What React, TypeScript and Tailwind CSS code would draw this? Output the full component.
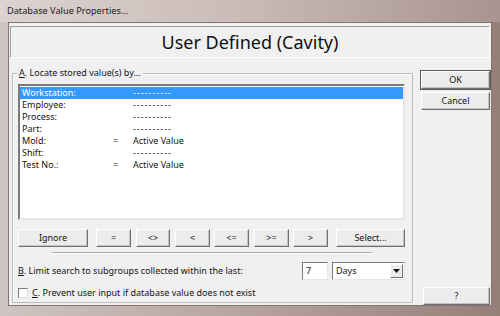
import React from "react";

const rows = [
  { name: "Workstation:", op: "", value: "----------" },
  { name: "Employee:", op: "", value: "----------" },
  { name: "Process:", op: "", value: "----------" },
  { name: "Part:", op: "", value: "----------" },
  { name: "Mold:", op: "=", value: "Active Value" },
  { name: "Shift:", op: "", value: "----------" },
  { name: "Test No.:", op: "=", value: "Active Value" },
];

const opButtons = [
  { label: "Ignore", w: "w-[70px]", ml: "ml-0" },
  { label: "=", w: "w-[35px]", ml: "ml-[8px]" },
  { label: "<>", w: "w-[34px]", ml: "ml-[5px]" },
  { label: "<", w: "w-[35px]", ml: "ml-[5px]" },
  { label: "<=", w: "w-[35px]", ml: "ml-[4px]" },
  { label: ">=", w: "w-[35px]", ml: "ml-[5px]" },
  { label: ">", w: "w-[35px]", ml: "ml-[4px]" },
  { label: "Select...", w: "w-[69px]", ml: "ml-[8px]" },
];

function Btn({ label, className = "" }: { label: string; className?: string }) {
  return (
    <div
      className={`flex items-center justify-center bg-[#ececec] border border-t-white border-l-white border-b-[#707070] border-r-[#707070] shadow-[inset_-1px_-1px_0_#c4c4c4] ${className}`}
    >
      {label}
    </div>
  );
}

export default function App() {
  return (
    <div className="w-[500px] h-[316px] overflow-hidden flex flex-col bg-gradient-to-r from-[#cfc4c1] via-[#b5a39e] to-[#958079] font-['Noto_Sans',sans-serif] text-[#141414]">
      {/* Title bar */}
      <div className="h-[22px] pl-[7px] flex items-center text-[9.2px] text-[#202020] bg-gradient-to-r from-[#dcd3d0] via-[#c9bab6] to-[#a8948f]">
        Database Value Properties...
      </div>

      {/* Client area */}
      <div className="mx-[8px] h-[284px] bg-[#f0f0f0] border border-[#85736f] flex flex-col">
        {/* Header */}
        <div className="mt-[3px] mx-[1px] h-[32px] border border-t-[#a0a0a0] border-l-[#a0a0a0] border-b-white border-r-white flex items-center justify-center text-[18px] text-[#111]">
          User Defined (Cavity)
        </div>

        <div className="flex mt-[13px]">
          {/* Group box */}
          <div className="relative ml-[3px] mt-[2px] w-[401px] h-[230px] border border-[#bdbdbd] shadow-[inset_1px_1px_0_#fff] text-[9px]">
            <div className="absolute -top-[7px] left-[4px] px-[2px] bg-[#f0f0f0] leading-[12px]">
              <span className="underline">A</span>. Locate stored value(s) by...
            </div>

            {/* List box */}
            <div className="ml-[5px] mt-[10px] w-[387px] h-[136px] bg-white border-2 border-t-[#7a7a7a] border-l-[#7a7a7a] border-b-[#e6e6e6] border-r-[#e6e6e6] pt-[1px]">
              {rows.map((r, i) => (
                <div
                  key={r.name}
                  className={`h-[12px] flex items-center leading-[12px] pl-[2px] ${i === 0 ? "bg-[#3399ff] text-white" : ""}`}
                >
                  <span className="w-[91px]">{r.name}</span>
                  <span className="w-[20px]">{r.op}</span>
                  <span className={r.op ? "" : "tracking-[1px]"}>{r.value}</span>
                </div>
              ))}
            </div>

            {/* Operator buttons */}
            <div className="flex ml-[5px] mt-[9px] h-[18px]">
              {opButtons.map((b) => (
                <Btn key={b.label} label={b.label} className={`${b.w} ${b.ml} h-[18px]`} />
              ))}
            </div>

            {/* Separator */}
            <div className="ml-[39px] mt-[5px] w-[320px] h-[2px] border-t border-t-[#a8a8a8] border-b border-b-white" />

            {/* B row */}
            <div className="flex items-center ml-[5px] mt-[8px] h-[18px]">
              <span className="w-[284px]">
                <span className="underline">B</span>. Limit search to subgroups collected within the last:
              </span>
              <div className="w-[26px] h-[18px] bg-white border border-t-[#7a7a7a] border-l-[#7a7a7a] border-b-[#e6e6e6] border-r-[#e6e6e6] pl-[3px] flex items-center">
                7
              </div>
              <div className="ml-[4px] w-[73px] h-[18px] bg-white border border-t-[#7a7a7a] border-l-[#7a7a7a] border-b-[#e6e6e6] border-r-[#e6e6e6] flex items-center justify-between pl-[3px] pr-[1px]">
                <span>Days</span>
                <div className="w-[13px] h-[14px] bg-[#ececec] border border-t-white border-l-white border-b-[#707070] border-r-[#707070] flex items-center justify-center">
                  <svg width="7" height="4" viewBox="0 0 7 4">
                    <path d="M0 0 H7 L3.5 4 Z" fill="#111" />
                  </svg>
                </div>
              </div>
            </div>

            {/* C row */}
            <div className="flex items-center ml-[5px] mt-[7px] h-[12px]">
              <div className="w-[10px] h-[10px] bg-white border border-t-[#7a7a7a] border-l-[#7a7a7a] border-b-[#dcdcdc] border-r-[#dcdcdc]" />
              <span className="ml-[4px]">
                <span className="underline">C</span>. Prevent user input if database value does not exist
              </span>
            </div>
          </div>

          {/* Right column */}
          <div className="ml-[8px] w-[69px] h-[234px] flex flex-col text-[9px]">
            <Btn label="OK" className="h-[18px] outline outline-1 outline-[#5a5a5a]" />
            <Btn label="Cancel" className="h-[18px] mt-[3px]" />
            <Btn label="?" className="h-[18px] mt-auto ml-[2px]" />
          </div>
        </div>
      </div>
    </div>
  );
}
